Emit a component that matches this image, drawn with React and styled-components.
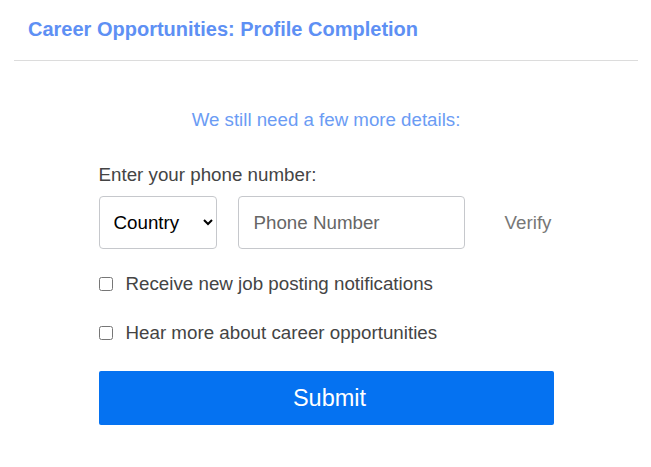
import React, { useState } from 'react';
import styled, { createGlobalStyle } from 'styled-components';

// ==============================================

const GlobalStyle = createGlobalStyle`
  body {
    margin: 0;
    background: #fff;
    font-family: "Liberation Sans", Arial, sans-serif;
  }
`;

const Page = styled.div`
  width: 651px;
  padding: 0 13px 0 14px;
  box-sizing: border-box;
`;

const Header = styled.header`
  padding: 17px 14px 19px;
  border-bottom: 1px solid #dcdcdc;
`;

const Title = styled.h1`
  margin: 0;
  font-size: 20px;
  line-height: 24px;
  font-weight: bold;
  color: #5e90f4;
`;

const Form = styled.form`
  width: 455px;
  margin: 0 auto;
  padding-top: 47px;
  display: flex;
  flex-direction: column;
`;

const Subtitle = styled.p`
  margin: 0 0 32px;
  text-align: center;
  font-size: 18.7px;
  line-height: 24px;
  color: #6b9cf4;
`;

const Label = styled.label`
  font-size: 18.75px;
  line-height: 22px;
  color: #444;
  margin-bottom: 10px;
`;

const Row = styled.div`
  display: flex;
  align-items: center;
  gap: 21px;
  margin-bottom: 24px;
`;

const Field = styled.div`
  height: 53px;
  box-sizing: border-box;
  border: 1px solid #c6c8cc;
  border-radius: 4px;
  width: ${({ width }) => width}px;
`;

const Select = styled.select`
  width: 100%;
  height: 100%;
  border: 0;
  background: transparent;
  padding: 0 4px 0 10px;
  font-family: inherit;
  font-size: 18.75px;
  color: #000;
  outline: none;
`;

const Input = styled.input`
  width: 100%;
  height: 100%;
  box-sizing: border-box;
  border: 0;
  background: transparent;
  padding: 0 15px;
  font-family: inherit;
  font-size: 18.75px;
  outline: none;
  &::placeholder { color: #666; }
`;

const Verify = styled.button`
  margin-left: auto;
  padding: 0 2px 0 0;
  border: 0;
  background: none;
  font-family: inherit;
  font-size: 18.75px;
  color: #777;
  cursor: pointer;
`;

const Check = styled.label`
  display: flex;
  align-items: center;
  gap: 13px;
  font-size: 18.75px;
  line-height: 22px;
  color: #444;
  margin-bottom: 27px;

  input {
    margin: 0;
    width: 14px;
    height: 14px;
  }
`;

const Submit = styled.button`
  height: 54px;
  border: 0;
  border-radius: 2px;
  padding: 0 0 0 7px;
  background: #0572f1;
  color: #fff;
  font-family: inherit;
  font-size: 23.5px;
  cursor: pointer;
`;

// ==============================================

const App = () => {
  const [form, setForm] = useState({ country: '', phone: '', jobs: false, career: false });

  const onChange = (event) => {
    const { name, type, checked, value } = event.target;
    setForm({ ...form, [name]: type === 'checkbox' ? checked : value });
  };

  return (
    <Page>
      <GlobalStyle />
      <Header>
        <Title>Career Opportunities: Profile Completion</Title>
      </Header>

      <Form onSubmit={(e) => e.preventDefault()}>
        <Subtitle>We still need a few more details:</Subtitle>

        <Label htmlFor="phone">Enter your phone number:</Label>
        <Row>
          <Field width={118}>
            <Select name="country" value={form.country} onChange={onChange}>
              <option value="">Country</option>
              <option value="us">United States</option>
              <option value="uk">United Kingdom</option>
            </Select>
          </Field>
          <Field width={227}>
            <Input id="phone" name="phone" value={form.phone} onChange={onChange} placeholder="Phone Number" />
          </Field>
          <Verify type="button">Verify</Verify>
        </Row>

        <Check>
          <input type="checkbox" name="jobs" checked={form.jobs} onChange={onChange} />
          Receive new job posting notifications
        </Check>
        <Check>
          <input type="checkbox" name="career" checked={form.career} onChange={onChange} />
          Hear more about career opportunities
        </Check>

        <Submit type="submit">Submit</Submit>
      </Form>
    </Page>
  );
};

export default App;
